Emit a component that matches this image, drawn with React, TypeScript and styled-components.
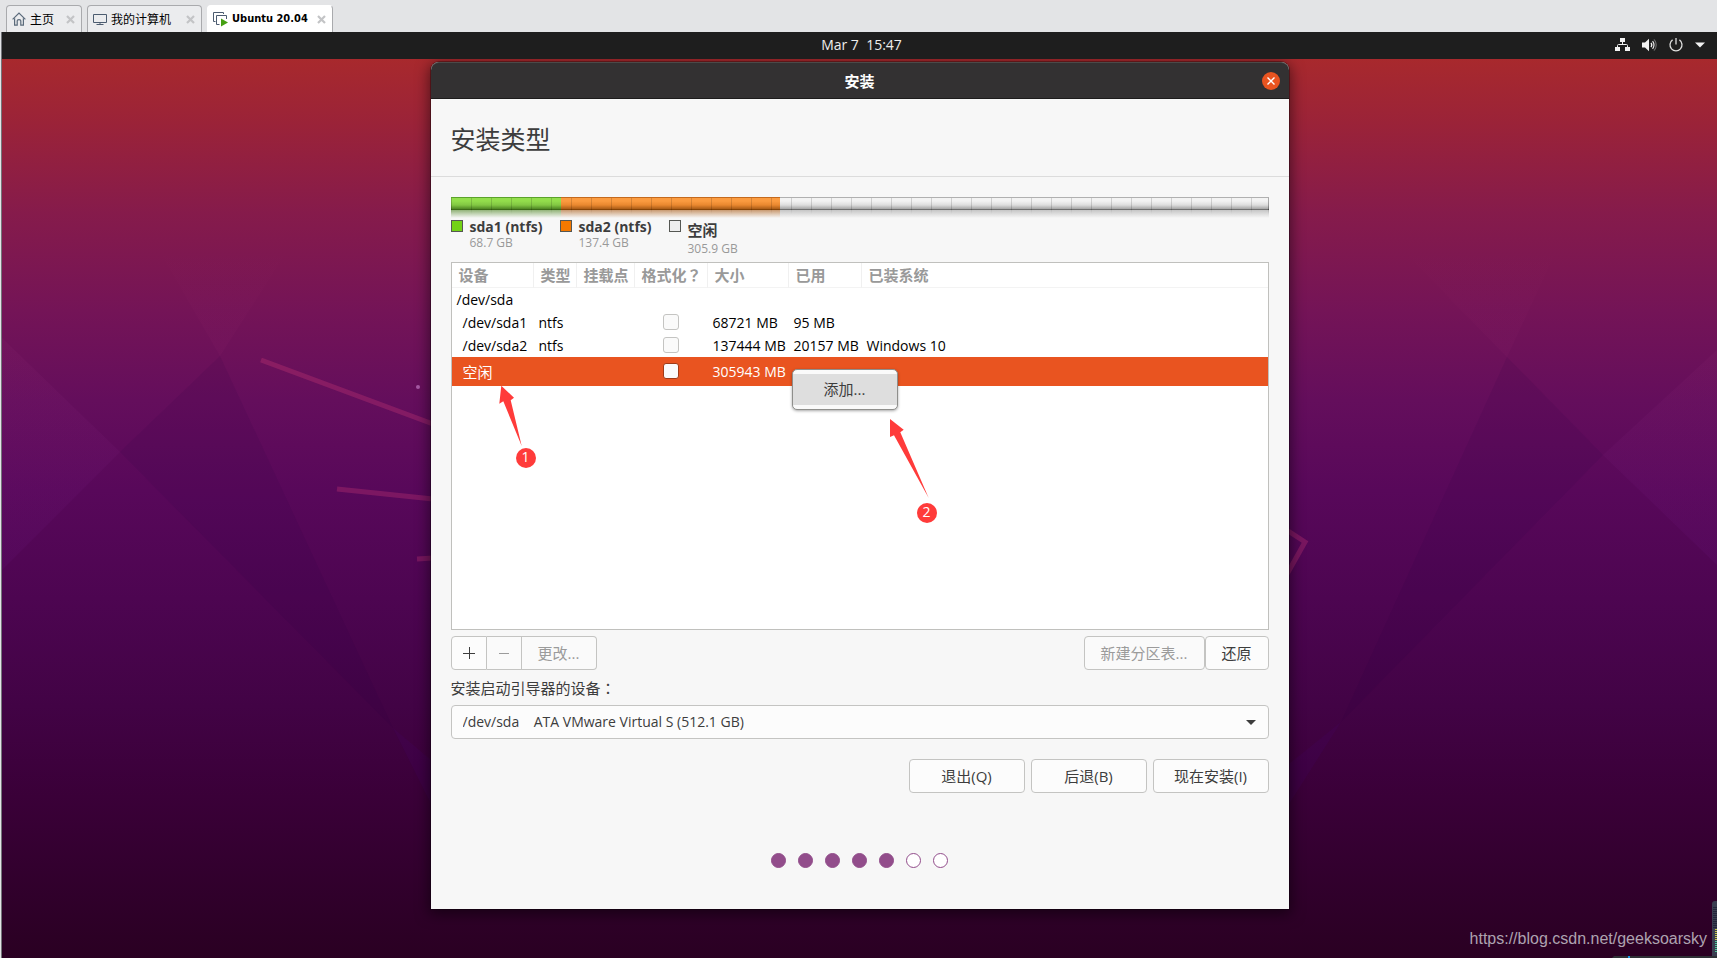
import React from 'react';
import styled, { createGlobalStyle } from 'styled-components';

const uiFont = '"Open Sans", "Noto Sans CJK SC", sans-serif';

const GlobalStyle = createGlobalStyle`
  *, *::before, *::after { box-sizing: border-box; }
  body { margin: 0; font-family: ${uiFont}; font-size: 14px; color: #3d3d3d; }
  button, select, input { font: inherit; color: inherit; margin: 0; }
`;

const Shell = styled.div`
  min-height: 100vh;
  display: flex;
  flex-direction: column;
  background: #e3e4e6;
`;

/* ---------- virtual machine tab strip ---------- */

const TabStrip = styled.nav`
  height: 32px;
  padding: 5px 6px 0;
  display: flex;
  gap: 5px;
`;

const VmTab = styled.div<{ $active?: boolean }>`
  display: flex;
  align-items: center;
  padding: 0 6px 0 5px;
  border: 1px solid ${(p) => (p.$active ? '#ffffff' : '#a9aaad')};
  border-right-color: #a9aaad;
  border-bottom: 0;
  border-radius: 4px 4px 0 0;
  background: ${(p) => (p.$active ? '#ffffff' : '#ebecee')};
`;

const VmTabLabel = styled.button<{ $active?: boolean }>`
  display: flex;
  align-items: center;
  gap: 4px;
  padding: 0;
  border: 0;
  background: none;
  color: #000;
  font-family: ${(p) =>
    p.$active ? '"DejaVu Sans Condensed", "DejaVu Sans", sans-serif' : '"Noto Sans CJK SC", sans-serif'};
  font-size: ${(p) => (p.$active ? 11 : 12)}px;
  font-weight: ${(p) => (p.$active ? 700 : 400)};
  line-height: 16px;
  white-space: nowrap;
`;

const VmTabClose = styled.button<{ $gap: number }>`
  display: flex;
  margin-left: ${(p) => p.$gap}px;
  padding: 0;
  border: 0;
  background: none;
`;

const CloseMark = () => (
  <svg width="9" height="9" viewBox="0 0 9 9" aria-hidden="true">
    <path d="M1 1 L8 8 M8 1 L1 8" stroke="#c3c4c6" strokeWidth="2.2" />
  </svg>
);

const HomeIcon = () => (
  <svg width="14" height="14" viewBox="0 0 14 14" fill="none" stroke="#5b6b7b" strokeWidth="1.2" aria-hidden="true">
    <path d="M0.6 7.4 L7 1 L13.4 7.4" />
    <path d="M2.6 6.2 V13.2 H5.2 V8.8 Q5.2 7.6 7 7.6 Q8.8 7.6 8.8 8.8 V13.2 H11.4 V6.2" />
  </svg>
);

const MonitorIcon = () => (
  <svg width="14" height="14" viewBox="0 0 14 14" fill="none" stroke="#4c5c70" aria-hidden="true">
    <path d="M0.5 2.5 H13.5 V10.5 H0.5 Z M7 10.5 V12.5 M3.5 12.5 H10.5" />
  </svg>
);

const RunningVmIcon = () => (
  <svg width="15" height="15" viewBox="0 0 15 15" fill="none" aria-hidden="true">
    <path d="M2.5 9.5 H0.5 V0.5 H10.5 V2" stroke="#4c5c70" />
    <path d="M6.5 12.5 H3.5 V3.5 H13.5 V7" stroke="#4c5c70" />
    <path d="M8 6.5 L15 10.5 L8 14.5 Z" fill="#45a012" />
  </svg>
);

/* ---------- guest screen ---------- */

const GuestScreen = styled.div`
  flex: 1;
  display: flex;
  flex-direction: column;
  margin-left: 1px;
  border-left: 1px solid #74757a;
`;

const TopBar = styled.header`
  height: 27px;
  display: grid;
  grid-template-columns: 1fr auto 1fr;
  align-items: center;
  padding: 0 12px 2px 16px;
  background: #1e1e1e;
  color: #eeeeec;
  line-height: 20px;
`;

const Clock = styled.time`
  grid-column: 2;
  white-space: pre;
`;

const StatusArea = styled.div`
  display: flex;
  justify-content: flex-end;
  align-items: center;
  gap: 12px;
`;

const StatusIcons = () => (
  <StatusArea>
    <svg width="15" height="14" viewBox="0 0 15 14" aria-label="网络">
      <path d="M5 0 H10 V4 H5 Z M0 9 H5 V13 H0 Z M10 9 H15 V13 H10 Z" fill="#f2f2f2" />
      <path d="M7.5 4 V6.5 M2.5 9 V7.5 Q2.5 6.5 3.5 6.5 H11.5 Q12.5 6.5 12.5 7.5 V9" stroke="#f2f2f2" fill="none" />
    </svg>
    <svg width="15" height="14" viewBox="0 0 15 14" fill="none" stroke="#f2f2f2" aria-label="音量">
      <path d="M0 4.5 H3 L7 0.8 V13.2 L3 9.5 H0 Z" fill="#f2f2f2" stroke="none" />
      <path d="M9 5 Q10.6 7 9 9" strokeWidth="1.3" />
      <path d="M10.6 3.2 Q13.4 7 10.6 10.8" strokeWidth="1.1" />
      <path d="M12.2 1.4 Q16.2 7 12.2 12.6" opacity="0.45" />
    </svg>
    <svg width="14" height="14" viewBox="0 0 14 14" fill="none" stroke="#dededd" strokeWidth="1.3" aria-label="电源">
      <path d="M3.6 1.9 A6 6 0 1 0 10.4 1.9 M7 0 V6.5" />
    </svg>
    <svg width="10" height="6" viewBox="0 0 10 6" aria-hidden="true">
      <path d="M0 0.5 H10 L5 5.5 Z" fill="#f2f2f2" />
    </svg>
  </StatusArea>
);

const Desktop = styled.main`
  position: relative;
  flex: 1;
  overflow: hidden;
  padding: 3px 16px 49px;
  background: linear-gradient(
    180deg,
    #a8292d 0%,
    #9b2338 7%,
    #861b4b 17%,
    #741457 28%,
    #640e5c 38%,
    #58085a 48%,
    #4d0551 60%,
    #420345 72%,
    #3a0038 82%,
    #30002b 93%,
    #2a0022 100%
  );
`;

const Wallpaper = styled.svg`
  position: absolute;
  inset: 0;
  width: 100%;
  height: 100%;
`;

const WallpaperArt = () => (
  <Wallpaper viewBox="0 0 1715 899" preserveAspectRatio="none" aria-hidden="true">
    <defs>
      <linearGradient id="facetFade" x1="0" y1="0" x2="0" y2="1">
        <stop offset="0.3" stopColor="#ff60a0" stopOpacity="0" />
        <stop offset="1" stopColor="#ff60a0" stopOpacity="0.03" />
      </linearGradient>
      <linearGradient id="sideFade" x1="0" y1="0" x2="0" y2="1">
        <stop offset="0" stopColor="#ff80c0" stopOpacity="0.03" />
        <stop offset="1" stopColor="#b040ff" stopOpacity="0.04" />
      </linearGradient>
    </defs>
    <path d="M128 141 H318 L218 297 Z" fill="url(#facetFade)" />
    <path d="M0 279 L118 393 L0 511 Z" fill="url(#sideFade)" />
    <path d="M218 297 L118 393 L391 669 Z" fill="#200040" opacity="0.09" />
    <path d="M391 669 L429 701 V745 Z" fill="#5010a0" opacity="0.08" />
    <path d="M1351 141 H1578 L1505 298 Z" fill="url(#facetFade)" />
    <path d="M1715 291 L1601 396 L1715 506 Z" fill="url(#sideFade)" />
    <path d="M1505 298 L1601 396 L1339 663 Z" fill="#200040" opacity="0.09" />
    <path d="M1339 663 L1287 705 V745 Z" fill="#5010a0" opacity="0.08" />
    <g stroke="#d23a76" strokeOpacity="0.3" fill="none">
      <path d="M259 301 L431 365" strokeWidth="5" />
      <path d="M335 430 L431 440" strokeWidth="5" />
      <path d="M415 500 L431 499" strokeWidth="5" />
      <path d="M1280 468 L1303 483 L1280 524" strokeWidth="5" />
    </g>
    <circle cx="416" cy="328" r="2" fill="#a85aa5" />
  </Wallpaper>
);

/* ---------- installer window ---------- */

const InstallerWindow = styled.section`
  position: relative;
  max-width: 858px;
  margin: 0 auto;
  border-radius: 8px 8px 0 0;
  background: #f7f7f7;
  box-shadow: 0 0 0 1px rgba(0, 0, 0, 0.3), 0 3px 14px 2px rgba(0, 0, 0, 0.5);
`;

const TitleBar = styled.div`
  height: 37px;
  display: grid;
  grid-template-columns: 1fr auto 1fr;
  align-items: center;
  padding: 0 9px;
  border-top: 1px solid #4b4a49;
  border-bottom: 1px solid #1d1c1c;
  border-radius: 8px 8px 0 0;
  background: #333132;
  color: #fff;
`;

const WindowTitle = styled.h1`
  grid-column: 2;
  margin: 0;
  font-size: 15px;
  line-height: 24px;
`;

const WindowClose = styled.button`
  justify-self: end;
  display: flex;
  align-items: center;
  justify-content: center;
  width: 18px;
  height: 18px;
  padding: 0;
  border: 0;
  border-radius: 50%;
  background: #e95420;
`;

const PageHeading = styled.h2`
  margin: 0;
  padding: 24px 20px 21px;
  border-bottom: 1px solid #dcdcdc;
  font-size: 25px;
  font-weight: 400;
  line-height: 32px;
`;

const Body = styled.div`
  padding: 20px 20px 41px;
`;

/* ---------- partition bar ---------- */

const palettes = {
  green: { edge: '#5ba32a', light: '#93de4c', mid: '#82c843', dark: '#4f8624', base: '#3c6b17', swatch: '#73d216' },
  orange: { edge: '#c46a1e', light: '#fb9b40', mid: '#ea882f', dark: '#aa5c17', base: '#874406', swatch: '#f57900' },
  grey: { edge: '#b0b0b0', light: '#f3f3f3', mid: '#dedede', dark: '#a5a5a5', base: '#707070', swatch: '#eeeeee' },
};
type Tone = keyof typeof palettes;

const PartitionBar = styled.div`
  position: relative;
  display: flex;
  height: 21px;
  &::after {
    content: '';
    position: absolute;
    inset: 1px 0 4px;
    border-left: 1px solid rgba(0, 0, 0, 0.2);
    border-right: 1px solid rgba(0, 0, 0, 0.3);
    background: repeating-linear-gradient(90deg, transparent 0 19px, rgba(0, 0, 0, 0.14) 19px 20px);
    mask-image: linear-gradient(#000 0 12px, rgba(0, 0, 0, 0.4) 12px, transparent);
  }
`;

const PartitionSegment = styled.div<{ $tone: Tone; $size: number }>`
  flex: ${(p) => p.$size} 0 0;
  background: ${({ $tone }) => {
    const c = palettes[$tone];
    return `linear-gradient(180deg, ${c.edge} 0 1px, ${c.light} 1px, ${c.light} 4px, ${c.mid} 8px,
      ${c.dark} 12px, ${c.base} 12px 13px, ${c.dark}99 13px, ${c.dark}00 21px)`;
  }};
`;

const Legend = styled.ul`
  display: grid;
  grid-template-columns: repeat(3, 109px);
  margin: 0 0 6px;
  padding: 0;
  list-style: none;
`;

const LegendItem = styled.li`
  display: flex;
  align-items: flex-start;
  gap: 7px;
  white-space: nowrap;
`;

const Swatch = styled.span<{ $tone: Tone }>`
  flex: none;
  width: 12px;
  height: 12px;
  margin-top: 2px;
  border: 1px solid #555753;
  background: ${(p) => palettes[p.$tone].swatch};
`;

const LegendName = styled.div<{ $tall?: boolean }>`
  font-weight: 700;
  font-size: ${(p) => (p.$tall ? 15 : 14)}px;
  line-height: ${(p) => (p.$tall ? 24 : 18)}px;
`;

const LegendSize = styled.div`
  color: #999;
  font-size: 12px;
  line-height: 14px;
`;

/* ---------- partition table ---------- */

const TableFrame = styled.div`
  position: relative;
  min-height: 368px;
  border: 1px solid #c0c0bd;
  background: #fff;
`;

const PartitionTable = styled.table`
  width: 100%;
  table-layout: fixed;
  border-collapse: separate;
  border-spacing: 0;
`;

const HeadCell = styled.th`
  height: 25px;
  padding: 0 0 0 7px;
  border-bottom: 1px solid #f3f3f3;
  border-right: 1px solid #f0f0f0;
  color: #999;
  font-size: 15px;
  line-height: 20px;
  text-align: left;
  white-space: nowrap;
  &:last-child { border-right: 0; }
`;

/* Full-width punctuation that sits in the middle of its em box */
const WideMark = styled.span`
  font-family: "Noto Sans CJK TC", sans-serif;
`;

const Row = styled.tr<{ $selected?: boolean }>`
  height: ${(p) => (p.$selected ? 29 : 23)}px;
  background: ${(p) => (p.$selected ? '#e95420' : 'transparent')};
  color: ${(p) => (p.$selected ? '#fff' : '#000')};
`;

const Cell = styled.td<{ $child?: boolean; $cjk?: boolean }>`
  padding: 0 0 0 ${(p) => (p.$child ? 11 : 5)}px;
  font-size: ${(p) => (p.$cjk ? 15 : 14)}px;
  line-height: 20px;
  white-space: nowrap;
`;

const CheckCell = styled.td`
  padding: 0 0 2px;
  font-size: 0;
  text-align: center;
`;

const FormatCheck = styled.input<{ $selected?: boolean }>`
  appearance: none;
  width: 16px;
  height: 16px;
  border: 1px solid ${(p) => (p.$selected ? '#a03a16' : '#c4c4c2')};
  border-radius: 3px;
  background: #fafafa;
  vertical-align: middle;
`;

const ContextMenu = styled.div`
  position: absolute;
  top: 106px;
  left: 340px;
  width: 106px;
  padding: 4px 0;
  border: 1px solid #8f8f8c;
  border-radius: 5px;
  background: #fafafa;
  box-shadow: 0 1px 3px rgba(0, 0, 0, 0.35);
`;

const MenuItem = styled.button`
  display: block;
  width: 100%;
  height: 31px;
  padding: 0;
  border: 0;
  background: #dedede;
  font-size: 15px;
  line-height: 31px;
`;

const Arrow = styled.svg<{ $x: number; $y: number }>`
  position: absolute;
  left: ${(p) => p.$x}px;
  top: ${(p) => p.$y}px;
  fill: #ff3b3a;
`;

const StepBadge = styled.span<{ $x: number; $y: number }>`
  position: absolute;
  left: ${(p) => p.$x}px;
  top: ${(p) => p.$y}px;
  width: 20px;
  height: 20px;
  border-radius: 50%;
  background: #ff3b3a;
  color: #fff;
  font-size: 14px;
  line-height: 18px;
  text-align: center;
`;

/* ---------- controls ---------- */

const Toolbar = styled.div`
  display: flex;
  margin-top: 6px;
`;

const Button = styled.button<{ $width: number }>`
  width: ${(p) => p.$width}px;
  height: 34px;
  display: flex;
  align-items: center;
  justify-content: center;
  padding: 0;
  border: 1px solid #c4c4c2;
  border-radius: 4px;
  background: #fcfcfc;
  font-size: 15px;
  line-height: 22px;
  white-space: nowrap;
  &:disabled { background: #fafafa; color: #9b9b9b; }
`;

const LinkedButtons = styled.div`
  display: flex;
  margin-right: auto;
  ${Button} + ${Button} { border-left: 0; }
  ${Button}:not(:first-child) { border-top-left-radius: 0; border-bottom-left-radius: 0; }
  ${Button}:not(:last-child) { border-top-right-radius: 0; border-bottom-right-radius: 0; }
`;

const FieldLabel = styled.label`
  display: block;
  margin: 8px 0 7px;
  font-size: 15px;
  line-height: 20px;
`;

const SelectBox = styled.div`
  position: relative;
`;

const DeviceSelect = styled.select`
  appearance: none;
  display: block;
  width: 100%;
  height: 34px;
  padding: 0 32px 2px 11px;
  border: 1px solid #c4c4c2;
  border-radius: 4px;
  background: #fcfcfc;
`;

const SelectArrow = styled.svg`
  position: absolute;
  right: 13px;
  top: 15px;
  pointer-events: none;
`;

const WizardActions = styled.div`
  display: flex;
  justify-content: flex-end;
  gap: 6px;
  margin-top: 20px;
`;

const ProgressDots = styled.div`
  display: flex;
  justify-content: center;
  gap: 12px;
  margin-top: 60px;
`;

const Dot = styled.span<{ $done: boolean }>`
  width: 15px;
  height: 15px;
  border: 1px solid #924d8b;
  border-radius: 50%;
  background: ${(p) => (p.$done ? '#924d8b' : '#fff')};
`;

/* ---------- overlays at the screen corner ---------- */

const Watermark = styled.a`
  position: absolute;
  right: 10px;
  bottom: 9px;
  color: #aea3b0;
  font-family: "Liberation Sans", Arial, sans-serif;
  font-size: 16px;
  line-height: 20px;
  text-decoration: none;
`;

const CornerWidget = styled.svg`
  position: absolute;
  right: 0;
  bottom: 0;
`;

const columns = [
  { title: '设备', width: 82 },
  { title: '类型', width: 43 },
  { title: '挂载点', width: 58 },
  { title: '格式化', mark: '？', width: 73 },
  { title: '大小', width: 81 },
  { title: '已用', width: 73 },
  { title: '已装系统' },
];

const partitions = [
  { device: '/dev/sda1', type: 'ntfs', size: '68721 MB', used: '95 MB', system: '' },
  { device: '/dev/sda2', type: 'ntfs', size: '137444 MB', used: '20157 MB', system: 'Windows 10' },
  { device: '空闲', type: '', size: '305943 MB', used: '', system: '', selected: true },
];

const segments: { name: string; size: string; tone: Tone; share: number; tall?: boolean }[] = [
  { name: 'sda1 (ntfs)', size: '68.7 GB', tone: 'green', share: 110 },
  { name: 'sda2 (ntfs)', size: '137.4 GB', tone: 'orange', share: 219 },
  { name: '空闲', size: '305.9 GB', tone: 'grey', share: 489, tall: true },
];

export default function App() {
  return (
    <Shell>
      <GlobalStyle />
      <TabStrip>
        <VmTab>
          <VmTabLabel><HomeIcon />主页</VmTabLabel>
          <VmTabClose $gap={12} aria-label="关闭"><CloseMark /></VmTabClose>
        </VmTab>
        <VmTab>
          <VmTabLabel><MonitorIcon />我的计算机</VmTabLabel>
          <VmTabClose $gap={15} aria-label="关闭"><CloseMark /></VmTabClose>
        </VmTab>
        <VmTab $active>
          <VmTabLabel $active><RunningVmIcon />Ubuntu 20.04</VmTabLabel>
          <VmTabClose $gap={9} aria-label="关闭"><CloseMark /></VmTabClose>
        </VmTab>
      </TabStrip>

      <GuestScreen>
        <TopBar>
          <Clock>{'Mar 7  15:47'}</Clock>
          <StatusIcons />
        </TopBar>
        <Desktop>
          <WallpaperArt />
          <InstallerWindow>
            <TitleBar>
              <WindowTitle>安装</WindowTitle>
              <WindowClose aria-label="关闭">
                <svg width="8" height="8" viewBox="0 0 8 8" aria-hidden="true">
                  <path d="M0.5 0.5 L7.5 7.5 M7.5 0.5 L0.5 7.5" stroke="#fff" strokeWidth="1.4" />
                </svg>
              </WindowClose>
            </TitleBar>
            <PageHeading>安装类型</PageHeading>
            <Body>
              <PartitionBar>
                {segments.map((s) => (
                  <PartitionSegment key={s.name} $tone={s.tone} $size={s.share} />
                ))}
              </PartitionBar>
              <Legend>
                {segments.map((s) => (
                  <LegendItem key={s.name}>
                    <Swatch $tone={s.tone} />
                    <div>
                      <LegendName $tall={s.tall}>{s.name}</LegendName>
                      <LegendSize>{s.size}</LegendSize>
                    </div>
                  </LegendItem>
                ))}
              </Legend>

              <TableFrame>
                <PartitionTable>
                  <colgroup>
                    {columns.map((c) => <col key={c.title} width={c.width} />)}
                  </colgroup>
                  <thead>
                    <tr>
                      {columns.map((c) => (
                        <HeadCell key={c.title} scope="col">
                          {c.title}
                          {c.mark && <WideMark>{c.mark}</WideMark>}
                        </HeadCell>
                      ))}
                    </tr>
                  </thead>
                  <tbody>
                    <Row><Cell colSpan={7}>/dev/sda</Cell></Row>
                    {partitions.map((p) => (
                      <Row key={p.device} $selected={p.selected}>
                        <Cell $child $cjk={p.selected}>{p.device}</Cell>
                        <Cell>{p.type}</Cell>
                        <Cell />
                        <CheckCell>
                          <FormatCheck type="checkbox" $selected={p.selected} aria-label={`格式化 ${p.device}`} />
                        </CheckCell>
                        <Cell>{p.size}</Cell>
                        <Cell>{p.used}</Cell>
                        <Cell>{p.system}</Cell>
                      </Row>
                    ))}
                  </tbody>
                </PartitionTable>
                <ContextMenu role="menu">
                  <MenuItem role="menuitem">添加...</MenuItem>
                </ContextMenu>
                <Arrow $x={47} $y={122} width="24" height="62" viewBox="0 0 24 62" aria-hidden="true">
                  <path d="M2.3 0.7 L0.3 18.7 L4.3 16.3 L22.7 61 L11.7 15.3 L15 12.7 Z" />
                </Arrow>
                <StepBadge $x={64} $y={185}>1</StepBadge>
                <Arrow $x={438} $y={156} width="40" height="80" viewBox="0 0 40 80" aria-hidden="true">
                  <path d="M0 0 L0 18 L4 16.3 L38.7 79 L10.3 13.3 L13.7 10.7 Z" />
                </Arrow>
                <StepBadge $x={465} $y={240}>2</StepBadge>
              </TableFrame>

              <Toolbar>
                <LinkedButtons>
                  <Button $width={36} aria-label="添加">
                    <svg width="12" height="12" viewBox="0 0 12 12" aria-hidden="true">
                      <path d="M6.5 0 V12 M0 6.5 H12" stroke="#3d3d3d" />
                    </svg>
                  </Button>
                  <Button $width={35} disabled aria-label="删除">
                    <svg width="12" height="12" viewBox="0 0 12 12" aria-hidden="true">
                      <path d="M1 6.5 H11" stroke="#9b9b9b" />
                    </svg>
                  </Button>
                  <Button $width={75} disabled>更改...</Button>
                </LinkedButtons>
                <Button $width={121} disabled>新建分区表...</Button>
                <Button $width={64}>还原</Button>
              </Toolbar>

              <FieldLabel htmlFor="bootloader">安装启动引导器的设备<WideMark>：</WideMark></FieldLabel>
              <SelectBox>
                <DeviceSelect id="bootloader">
                  <option>{'/dev/sda\u00a0\u00a0\u00a0\u00a0ATA VMware Virtual S (512.1 GB)'}</option>
                </DeviceSelect>
                <SelectArrow width="10" height="5" viewBox="0 0 10 5" aria-hidden="true">
                  <path d="M0 0 H10 L5 5 Z" fill="#3d3d3d" />
                </SelectArrow>
              </SelectBox>

              <WizardActions>
                <Button $width={116}>退出(Q)</Button>
                <Button $width={116}>后退(B)</Button>
                <Button $width={116}>现在安装(I)</Button>
              </WizardActions>

              <ProgressDots>
                {[0, 1, 2, 3, 4, 5, 6].map((i) => <Dot key={i} $done={i < 5} />)}
              </ProgressDots>
            </Body>
          </InstallerWindow>

          <CornerWidget width="105" height="57" viewBox="0 0 105 57" aria-hidden="true">
            <path d="M100 3 Q100 0 103 0 H105 V57 H100 Z" fill="#3a3d50" />
            <path d="M103 6 V28" stroke="#23253a" strokeWidth="4" strokeDasharray="1 1" />
            <path d="M104 28 V40" stroke="#c8c84a" strokeWidth="2" strokeDasharray="1 1" />
            <path d="M104 40 V52" stroke="#4fc79a" strokeWidth="2" strokeDasharray="1 1" />
            <path d="M0 57 L2 55 H105 V57 Z" fill="#2f3136" />
            <path d="M16 55 H18 V57 H16 Z" fill="#1a9be6" />
          </CornerWidget>
          <Watermark href="https://blog.csdn.net/geeksoarsky">https://blog.csdn.net/geeksoarsky</Watermark>
        </Desktop>
      </GuestScreen>
    </Shell>
  );
}
